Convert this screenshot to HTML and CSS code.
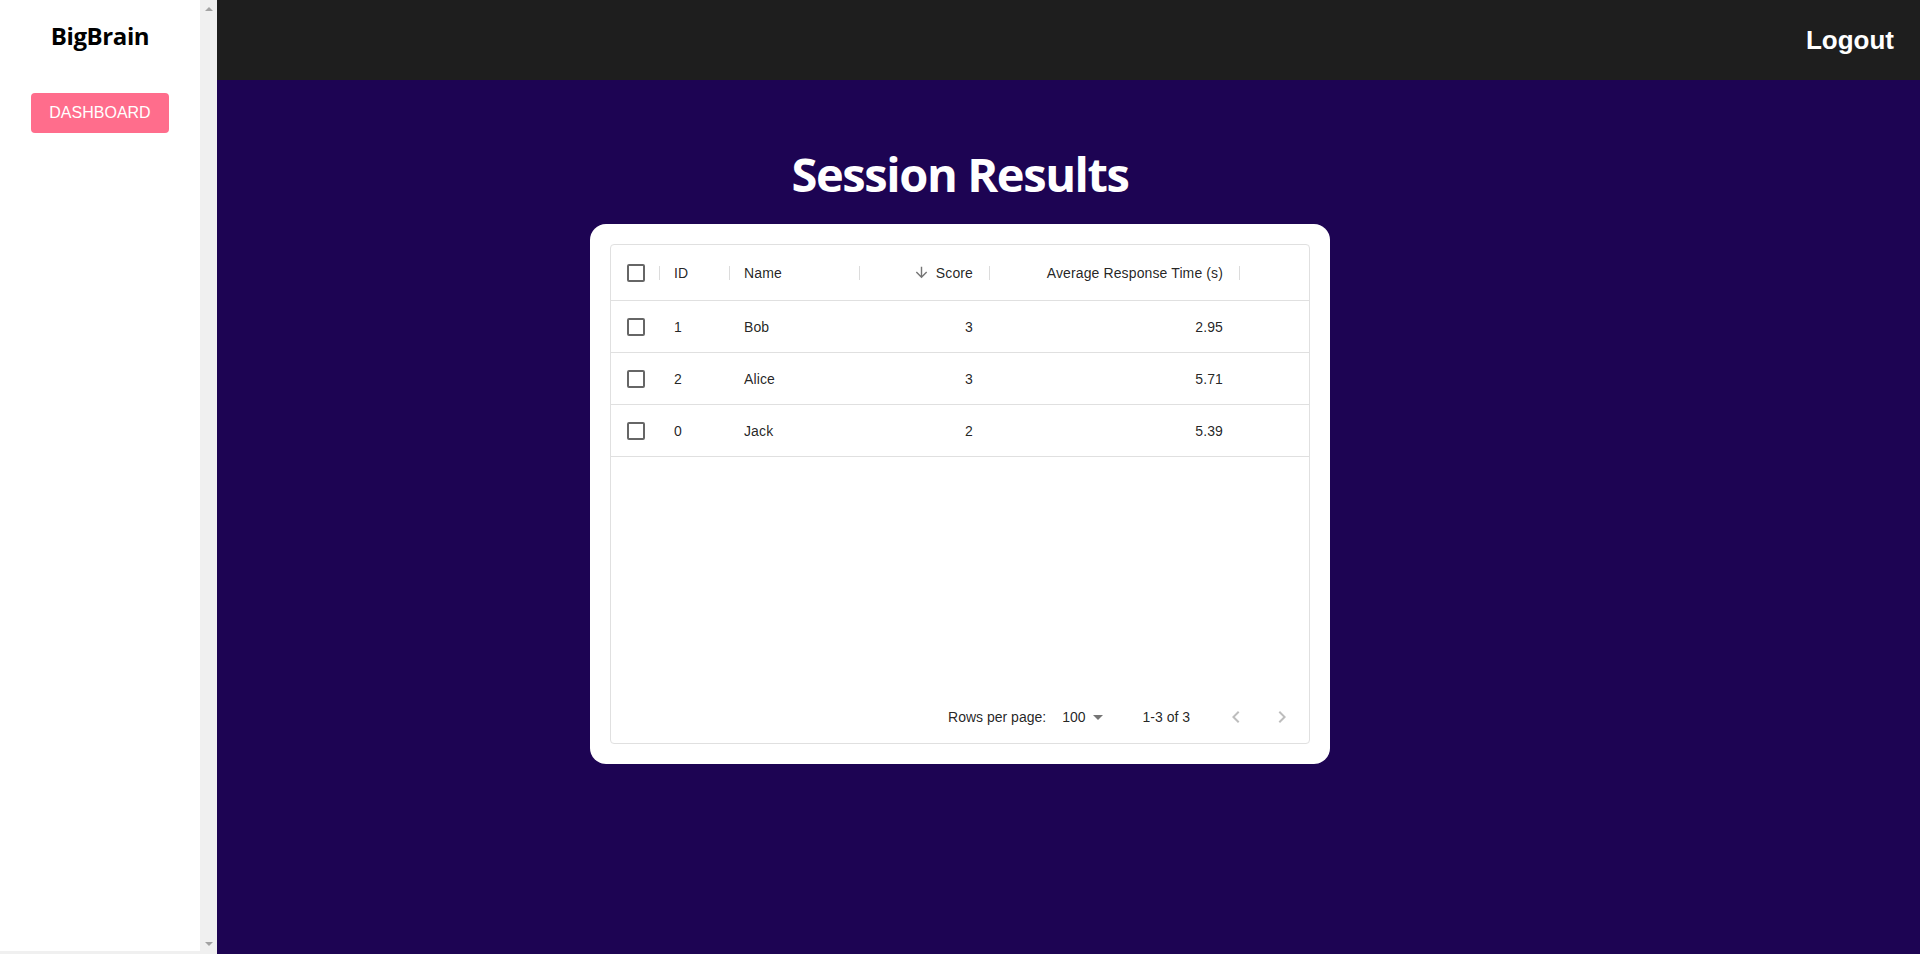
FILE: index.html
```html
<!DOCTYPE html>
<html lang="en">
<head>
<meta charset="utf-8">
<title>BigBrain - Session Results</title>
<link rel="stylesheet" href="styles.css">
</head>
<body>
<div class="app">
  <aside class="side">
    <div class="side-row">
      <nav class="sidebar">
        <div class="brand">BigBrain</div>
        <button class="nav-btn">DASHBOARD</button>
      </nav>
      <div class="vscroll">
        <span class="arrow-up"></span>
        <span class="arrow-down"></span>
      </div>
    </div>
    <div class="hscroll"></div>
  </aside>
  <div class="main">
    <header class="topbar"><span class="logout">Logout</span></header>
    <section class="content">
      <h1 class="title">Session Results</h1>
      <div class="card">
        <div class="grid">
          <div class="row head">
            <div class="cell check sep"><span class="box"></span></div>
            <div class="cell txt sep">ID</div>
            <div class="cell txt sep">Name</div>
            <div class="cell num sep">
              <svg class="sort" viewBox="0 0 24 24"><path d="M20 12l-1.41-1.41L13 16.17V4h-2v12.17l-5.58-5.59L4 12l8 8 8-8z"/></svg>
              <span>Score</span>
            </div>
            <div class="cell num sep">Average Response Time (s)</div>
            <div class="cell"></div>
          </div>
          <div class="row">
            <div class="cell check"><span class="box"></span></div>
            <div class="cell txt">1</div>
            <div class="cell txt">Bob</div>
            <div class="cell num">3</div>
            <div class="cell num">2.95</div>
            <div class="cell"></div>
          </div>
          <div class="row">
            <div class="cell check"><span class="box"></span></div>
            <div class="cell txt">2</div>
            <div class="cell txt">Alice</div>
            <div class="cell num">3</div>
            <div class="cell num">5.71</div>
            <div class="cell"></div>
          </div>
          <div class="row">
            <div class="cell check"><span class="box"></span></div>
            <div class="cell txt">0</div>
            <div class="cell txt">Jack</div>
            <div class="cell num">2</div>
            <div class="cell num">5.39</div>
            <div class="cell"></div>
          </div>
          <div class="filler"></div>
          <div class="footer">
            <span class="fp-label">Rows per page:</span>
            <div class="fp-select">
              <span>100</span>
              <svg class="fp-drop" viewBox="0 0 24 24"><path d="M7 10l5 5 5-5z"/></svg>
            </div>
            <span class="fp-count">1-3 of 3</span>
            <div class="fp-actions">
              <span class="fp-btn"><svg viewBox="0 0 24 24"><path d="M15.41 7.41 14 6l-6 6 6 6 1.41-1.41L10.83 12z"/></svg></span>
              <span class="fp-btn"><svg viewBox="0 0 24 24"><path d="M10 6 8.59 7.41 13.17 12l-4.58 4.59L10 18l6-6z"/></svg></span>
            </div>
          </div>
        </div>
      </div>
    </section>
  </div>
</div>
</body>
</html>
```
FILE: styles.css
```css
* { box-sizing: border-box; }

html, body {
  margin: 0;
  padding: 0;
  height: 100%;
}

body {
  font-family: "Liberation Sans", Arial, sans-serif;
  overflow: hidden;
}

.app {
  display: flex;
  width: 1920px;
  height: 954px;
}

/* ---------- sidebar ---------- */
.side {
  width: 217px;
  flex: 0 0 217px;
  display: flex;
  flex-direction: column;
  background: #ffffff;
}

.side-row {
  flex: 1;
  display: flex;
  min-height: 0;
}

.sidebar {
  width: 200px;
  display: flex;
  flex-direction: column;
  align-items: center;
  padding-top: 22px;
}

.brand {
  font-family: "Open Sans", "Noto Sans", sans-serif;
  font-weight: 700;
  font-size: 24px;
  line-height: 1.2;
  letter-spacing: -0.4px;
  color: #000000;
}

.nav-btn {
  margin-top: 42px;
  height: 40px;
  padding: 0 18px;
  border: none;
  border-radius: 4px;
  background: #ff6d8c;
  color: #ffffff;
  font-family: "Liberation Sans", Arial, sans-serif;
  font-size: 16px;
  line-height: 40px;
}

.vscroll {
  width: 17px;
  background: #f0f0f0;
  display: flex;
  flex-direction: column;
  justify-content: space-between;
  align-items: center;
  padding: 7px 0 5px;
}

.arrow-up {
  width: 0;
  height: 0;
  border-left: 4px solid transparent;
  border-right: 4px solid transparent;
  border-bottom: 4px solid #a3a3a3;
}

.arrow-down {
  width: 0;
  height: 0;
  border-left: 4px solid transparent;
  border-right: 4px solid transparent;
  border-top: 4px solid #a3a3a3;
}

.hscroll {
  height: 3px;
  background: #f0f0f0;
}

/* ---------- main ---------- */
.main {
  flex: 1;
  display: flex;
  flex-direction: column;
  background: #1d0453;
}

.topbar {
  height: 80px;
  flex: 0 0 80px;
  background: #1e1e1e;
  display: flex;
  justify-content: flex-end;
  align-items: center;
  padding-right: 26px;
}

.logout {
  color: #ffffff;
  font-family: "Liberation Sans", Arial, sans-serif;
  font-weight: 700;
  font-size: 26px;
}

.content {
  flex: 1;
  display: flex;
  flex-direction: column;
  align-items: center;
  padding-top: 66px;
  padding-right: 217px;
}

.title {
  margin: 0 0 22px;
  font-family: "Open Sans", "Noto Sans", sans-serif;
  font-weight: 700;
  font-size: 47px;
  line-height: 1.2;
  letter-spacing: -1.4px;
  color: #ffffff;
}

.card {
  width: 740px;
  height: 540px;
  padding: 20px;
  background: #ffffff;
  border-radius: 16px;
}

/* ---------- data grid ---------- */
.grid {
  height: 100%;
  display: flex;
  flex-direction: column;
  border: 1px solid #e0e0e0;
  border-radius: 4px;
  font-family: "Liberation Sans", Arial, sans-serif;
  font-size: 14px;
  color: rgba(0, 0, 0, 0.87);
}

.row {
  display: grid;
  grid-template-columns: 50px 70px 130px 130px 250px 1fr;
  height: 52px;
  border-bottom: 1px solid #e0e0e0;
  letter-spacing: 0.12px;
}

.row.head {
  height: 56px;
}

.cell {
  display: flex;
  align-items: center;
  position: relative;
  white-space: nowrap;
}

.cell.check {
  justify-content: center;
}

.cell.txt {
  padding-left: 13px;
}

.cell.num {
  justify-content: flex-end;
  padding-right: 18px;
}

.cell.sep::after {
  content: "";
  position: absolute;
  right: 1px;
  top: 50%;
  width: 1px;
  height: 14px;
  margin-top: -7px;
  background: #dcdcdc;
}

.box {
  width: 18px;
  height: 18px;
  border: 2px solid rgba(0, 0, 0, 0.6);
  border-radius: 2px;
}

.sort {
  width: 17px;
  height: 17px;
  margin-right: 6px;
  fill: rgba(0, 0, 0, 0.54);
}

.filler {
  flex: 1;
}

.footer {
  height: 52px;
  flex: 0 0 52px;
  display: flex;
  justify-content: flex-end;
  align-items: center;
  padding-right: 7px;
}

.fp-select {
  display: flex;
  align-items: center;
  margin-left: 8px;
  margin-right: 33px;
  padding-left: 8px;
}

.fp-drop {
  width: 24px;
  height: 24px;
  fill: rgba(0, 0, 0, 0.54);
}

.fp-actions {
  display: flex;
  gap: 6px;
  margin-left: 26px;
}

.fp-btn {
  width: 40px;
  height: 40px;
  display: flex;
  align-items: center;
  justify-content: center;
}

.fp-btn svg {
  width: 24px;
  height: 24px;
  fill: rgba(0, 0, 0, 0.26);
}
```
